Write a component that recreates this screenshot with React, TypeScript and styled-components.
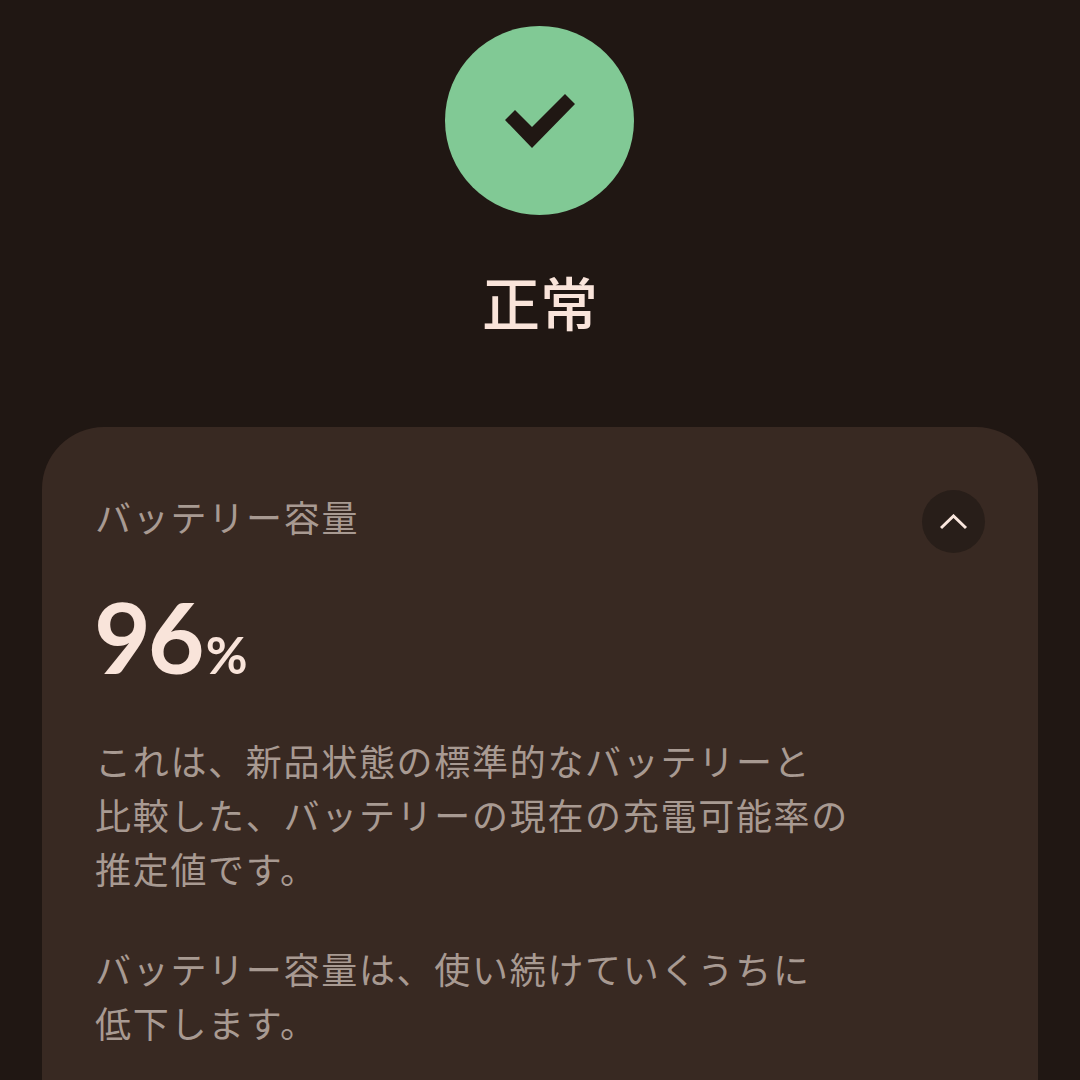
import React from "react";
import styled, { createGlobalStyle } from "styled-components";

const GlobalStyle = createGlobalStyle`
  html, body {
    margin: 0;
    padding: 0;
    background: #201713;
  }
`;

const App = () => {
  return (
    <Screen>
      <GlobalStyle />
      <StatusBadge>
        <svg width="70" height="54" viewBox="0 0 70 54">
          <path d="M0 26 L10 16 L27 33 L60 0 L70 10 L27 54 Z" fill="#201713" />
        </svg>
      </StatusBadge>
      <StatusTitle>正常</StatusTitle>
      <Card>
        <CardHeader>
          <CardLabel>バッテリー容量</CardLabel>
          <CollapseButton aria-label="collapse">
            <svg width="28" height="16" viewBox="0 0 28 16">
              <path d="M1 14 L13.5 2 L26 14" fill="none" stroke="#f9e6dd" strokeWidth="3" />
            </svg>
          </CollapseButton>
        </CardHeader>
        <Capacity>
          96<Percent>%</Percent>
        </Capacity>
        <Description>
          これは、新品状態の標準的なバッテリーと
          <br />
          比較した、バッテリーの現在の充電可能率の
          <br />
          推定値です。
        </Description>
        <Description>
          バッテリー容量は、使い続けていくうちに
          <br />
          低下します。
        </Description>
      </Card>
    </Screen>
  );
};

const Screen = styled.div`
  height: 1080px;
  overflow: hidden;
  box-sizing: border-box;
  padding: 26px 42px 0;
  display: flex;
  flex-direction: column;
  align-items: center;
  background: #201713;
  font-family: "Noto Sans CJK JP", "Noto Sans", sans-serif;
`;

const StatusBadge = styled.div`
  width: 189px;
  height: 189px;
  flex-shrink: 0;
  margin-right: 1px;
  border-radius: 50%;
  background: #81c995;
  display: flex;
  align-items: center;
  justify-content: center;
`;

const StatusTitle = styled.h1`
  margin: 46px 0 0;
  height: 80px;
  line-height: 80px;
  font-size: 58px;
  font-weight: 500;
  color: #f9e4da;
`;

const Card = styled.section`
  align-self: stretch;
  flex-shrink: 0;
  margin-top: 86px;
  height: 720px;
  box-sizing: border-box;
  padding: 63px 53px 0 53px;
  border-radius: 62px;
  background: #382922;
`;

const CardHeader = styled.div`
  display: flex;
  align-items: center;
  justify-content: space-between;
`;

const CardLabel = styled.div`
  margin-top: -12px;
  font-size: 36px;
  letter-spacing: 1.75px;
  line-height: 54px;
  color: #a89a92;
`;

const CollapseButton = styled.button`
  width: 63px;
  height: 63px;
  padding: 0;
  border: none;
  border-radius: 50%;
  background: #281e19;
  display: flex;
  align-items: center;
  justify-content: center;
`;

const Capacity = styled.div`
  margin-top: 30px;
  height: 106px;
  line-height: 106px;
  margin-left: -1px;
  font-family: Lato, "Noto Sans", sans-serif;
  font-size: 98px;
  font-weight: 700;
  letter-spacing: -3px;
  color: #f9e4da;
`;

const Percent = styled.span`
  margin-left: 4px;
  font-size: 51px;
  font-weight: 700;
  letter-spacing: 0;
`;

const Description = styled.p`
  margin: 44px 0 46px;
  font-size: 36px;
  letter-spacing: 1.7px;
  line-height: 54px;
  color: #a89a92;
  & + & {
    margin-top: 0;
  }
`;

export default App;
